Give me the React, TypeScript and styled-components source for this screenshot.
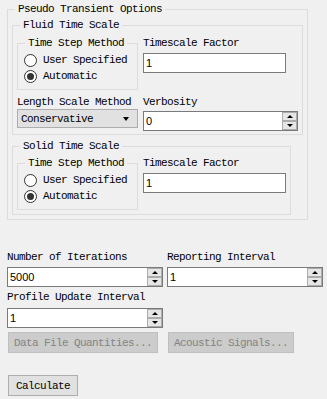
import React from "react";
import styled, { createGlobalStyle } from "styled-components";

const GlobalStyle = createGlobalStyle`
  * { box-sizing: border-box; }
  body {
    margin: 0;
    background: #f0f0f0;
    font-family: "Liberation Mono", "DejaVu Sans Mono", monospace;
    font-size: 11px;
    letter-spacing: -0.6px;
    color: #000;
  }
`;

const Page = styled.div`
  width: 327px;
  height: 399px;
  padding: 3px 0 0 7px;
  display: flex;
  flex-direction: column;
  align-items: flex-start;
`;

const Group = styled.fieldset<{ $w?: number; $pt: number; $pb: number; $px: number; $mt?: number }>`
  margin: ${(p) => p.$mt ?? 0}px 0 0 0;
  min-width: 0;
  width: ${(p) => (p.$w ? `${p.$w}px` : "auto")};
  align-self: ${(p) => (p.$w ? "flex-start" : "stretch")};
  border: 1px solid #dcdcdc;
  padding: ${(p) => p.$pt}px ${(p) => p.$px}px ${(p) => p.$pb}px;
`;

const Caption = styled.legend<{ $ml: number }>`
  margin-left: ${(p) => p.$ml}px;
  padding: 0 3px;
  height: 12px;
  line-height: 12px;
  white-space: nowrap;
`;

const FieldGrid = styled.div`
  display: grid;
  grid-template-columns: 121px 1fr;
  column-gap: 5px;
  row-gap: 6px;
  align-items: start;
`;

const Field = styled.div<{ $gap: number }>`
  display: flex;
  flex-direction: column;
  align-items: flex-start;
  gap: ${(p) => p.$gap}px;
`;

const Label = styled.div`
  height: 12px;
  line-height: 12px;
  white-space: nowrap;
`;

const RadioRow = styled.label`
  display: flex;
  align-items: center;
  gap: 6px;
  height: 16px;
  white-space: nowrap;
`;

const Radio = styled.span<{ $on?: boolean }>`
  width: 13px;
  height: 13px;
  border-radius: 50%;
  border: 1px solid #333;
  background: #fff;
  display: flex;
  align-items: center;
  justify-content: center;
  &::after {
    content: "";
    width: 7px;
    height: 7px;
    border-radius: 50%;
    background: #333;
    display: ${(p) => (p.$on ? "block" : "none")};
  }
`;

const TextBox = styled.input<{ $w: number }>`
  width: ${(p) => p.$w}px;
  height: 20px;
  border: 1px solid #7a7a7a;
  background: #fff;
  padding: 0 2px;
  margin: 0;
  font-family: "Liberation Sans", Arial, sans-serif;
  font-size: 11px;
  letter-spacing: 0;
  color: #000;
  outline: none;
`;

const SpinBox = styled.div<{ $w: number }>`
  width: ${(p) => p.$w}px;
  height: 20px;
  border: 1px solid #7a7a7a;
  background: #fff;
  display: flex;
`;

const SpinInput = styled.input`
  flex: 1;
  min-width: 0;
  border: none;
  padding: 0 2px;
  margin: 0;
  background: transparent;
  font-family: "Liberation Sans", Arial, sans-serif;
  font-size: 11px;
  letter-spacing: 0;
  color: #000;
  outline: none;
`;

const SpinButtons = styled.div`
  width: 15px;
  display: flex;
  flex-direction: column;
`;

const SpinArrow = styled.span<{ $down?: boolean }>`
  flex: 1;
  background: #e6e6e6;
  border: 1px solid #acacac;
  display: flex;
  align-items: center;
  justify-content: center;
  &::after {
    content: "";
    border-left: 3px solid transparent;
    border-right: 3px solid transparent;
    ${(p) => (p.$down ? "border-top: 3px solid #000;" : "border-bottom: 3px solid #000;")}
  }
`;

const Combo = styled.div`
  width: 121px;
  height: 19px;
  margin-top: -3px;
  border: 1px solid #adadad;
  background: #e1e1e1;
  padding: 0 8px 0 3px;
  display: flex;
  align-items: center;
  justify-content: space-between;
  &::after {
    content: "";
    border-left: 3px solid transparent;
    border-right: 3px solid transparent;
    border-top: 4px solid #000;
  }
`;

const BottomGrid = styled.div`
  margin-top: 31px;
  display: grid;
  grid-template-columns: 156px 156px;
  column-gap: 4px;
  row-gap: 4px;
`;

const Button = styled.button<{ $w: number; $disabled?: boolean }>`
  width: ${(p) => p.$w}px;
  height: 21px;
  margin: 0 0 0 1px;
  padding: 0;
  border: 1px solid ${(p) => (p.$disabled ? "#bfbfbf" : "#adadad")};
  background: ${(p) => (p.$disabled ? "#cccccc" : "#e1e1e1")};
  color: ${(p) => (p.$disabled ? "#838383" : "#000")};
  font-family: inherit;
  font-size: 11px;
  letter-spacing: -0.6px;
  white-space: nowrap;
`;

const CalcButton = styled(Button)`
  margin-top: 22px;
`;

function TimeStepGroup() {
  return (
    <Group $pt={3} $pb={5} $px={6}>
      <Caption $ml={1}>Time Step Method</Caption>
      <RadioRow>
        <Radio />
        User Specified
      </RadioRow>
      <RadioRow>
        <Radio $on />
        Automatic
      </RadioRow>
    </Group>
  );
}

function Spin({ w, value }: { w: number; value: string }) {
  return (
    <SpinBox $w={w}>
      <SpinInput defaultValue={value} />
      <SpinButtons>
        <SpinArrow />
        <SpinArrow $down />
      </SpinButtons>
    </SpinBox>
  );
}

export default function App() {
  return (
    <Page>
      <GlobalStyle />
      <Group $w={301} $pt={4} $pb={4} $px={4}>
        <Caption $ml={3}>Pseudo Transient Options</Caption>
        <Group $pt={6} $pb={3} $px={4}>
          <Caption $ml={3}>Fluid Time Scale</Caption>
          <FieldGrid>
            <TimeStepGroup />
            <Field $gap={4}>
              <Label>Timescale Factor</Label>
              <TextBox $w={143} defaultValue="1" />
            </Field>
            <Field $gap={4}>
              <Label>Length Scale Method</Label>
              <Combo>Conservative</Combo>
            </Field>
            <Field $gap={3}>
              <Label>Verbosity</Label>
              <Spin w={155} value="0" />
            </Field>
          </FieldGrid>
        </Group>
        <Group $w={279} $mt={5} $pt={5} $pb={4} $px={4}>
          <Caption $ml={3}>Solid Time Scale</Caption>
          <FieldGrid>
            <TimeStepGroup />
            <Field $gap={4}>
              <Label>Timescale Factor</Label>
              <TextBox $w={143} defaultValue="1" />
            </Field>
          </FieldGrid>
        </Group>
      </Group>
      <BottomGrid>
        <Field $gap={4}>
          <Label>Number of Iterations</Label>
          <Spin w={156} value="5000" />
        </Field>
        <Field $gap={4}>
          <Label>Reporting Interval</Label>
          <Spin w={156} value="1" />
        </Field>
        <Field $gap={5}>
          <Label>Profile Update Interval</Label>
          <Spin w={156} value="1" />
        </Field>
        <div />
        <Button $w={150} $disabled>
          Data File Quantities...
        </Button>
        <Button $w={126} $disabled>
          Acoustic Signals...
        </Button>
      </BottomGrid>
      <CalcButton $w={70}>Calculate</CalcButton>
    </Page>
  );
}
